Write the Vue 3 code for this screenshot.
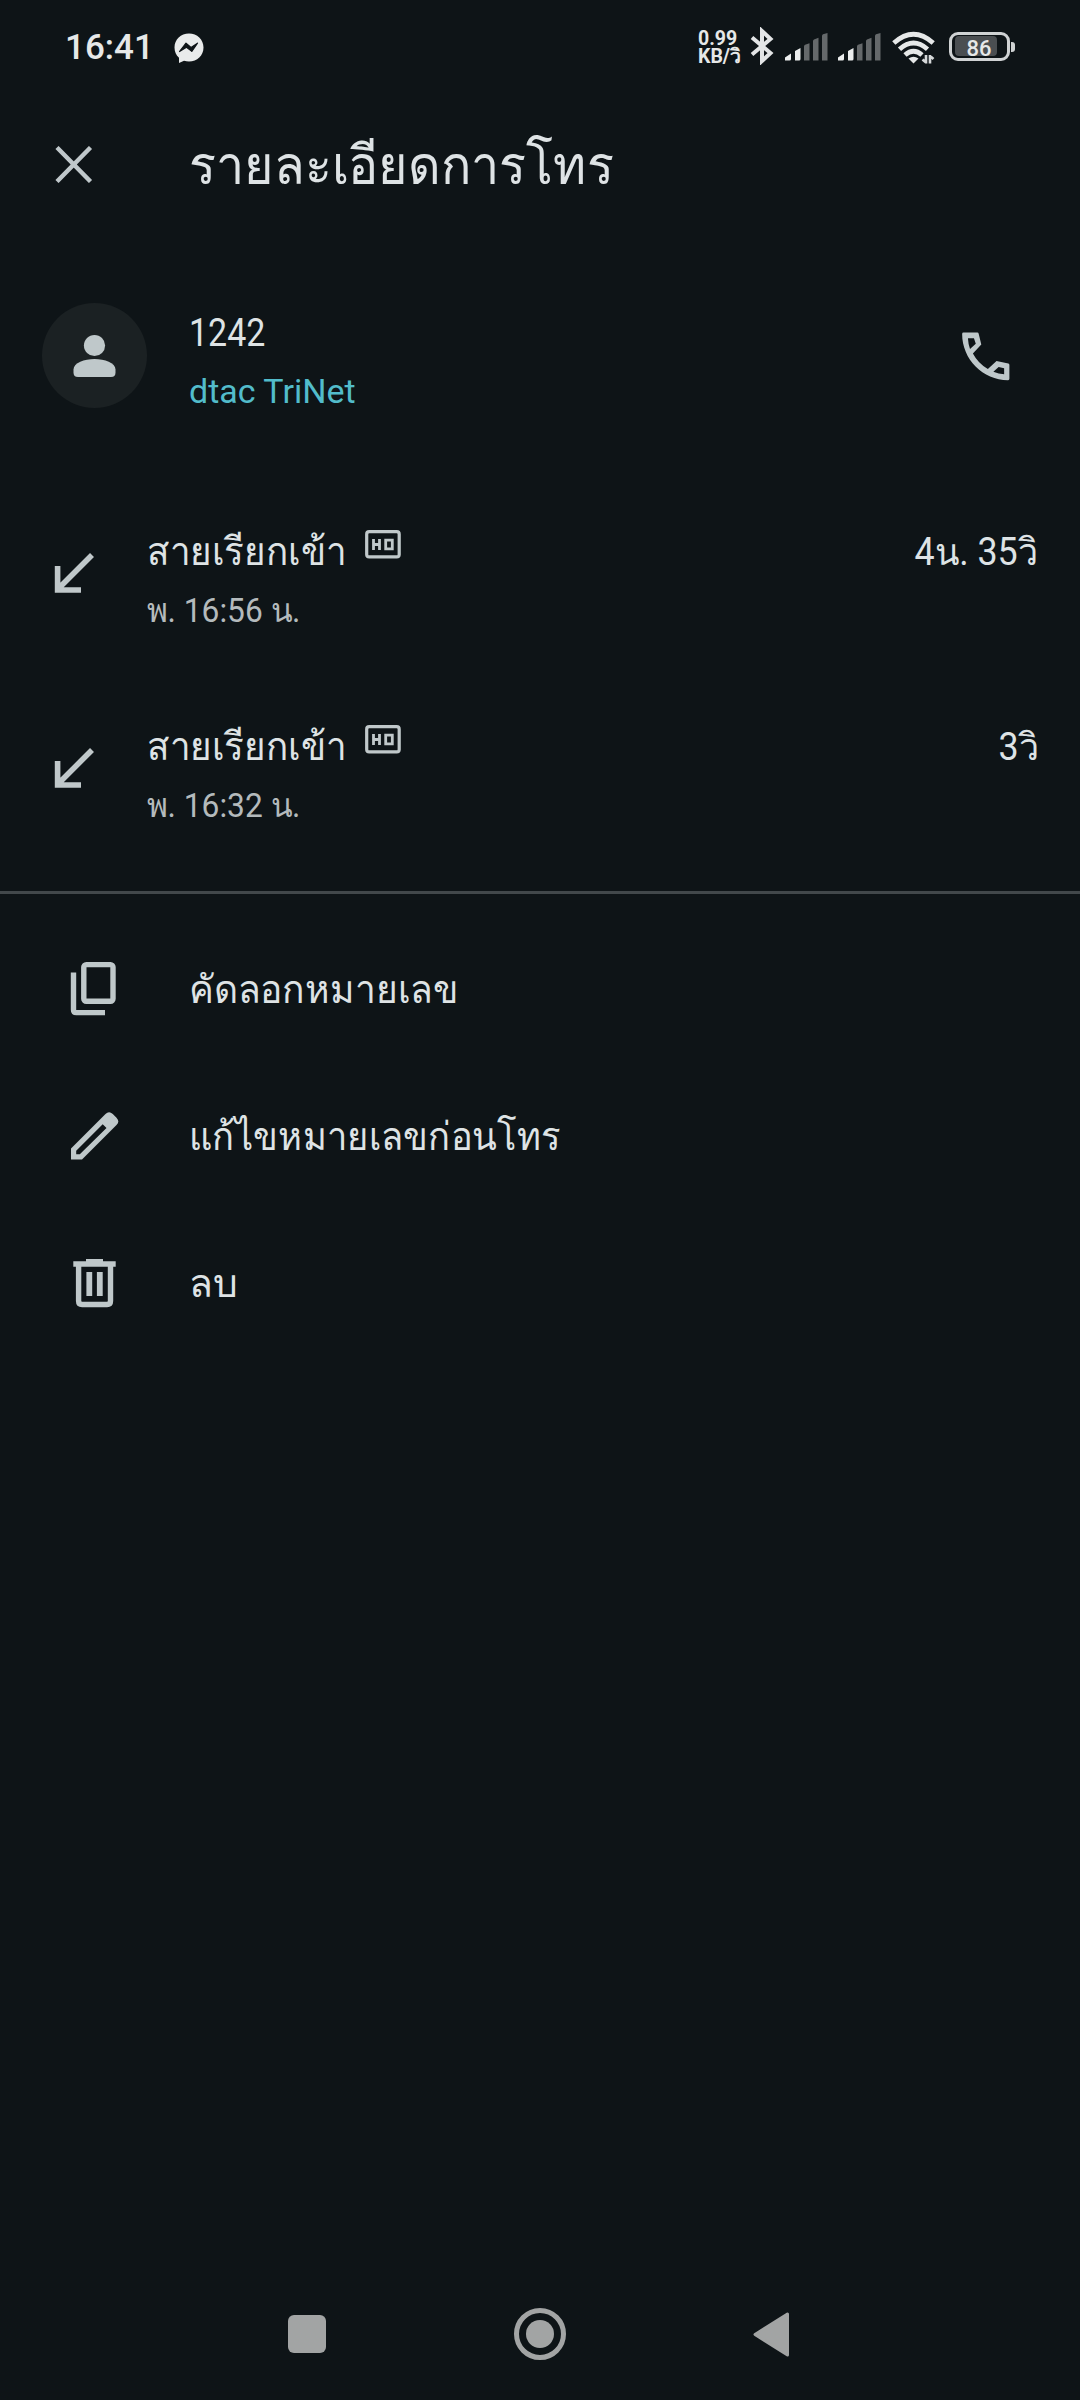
<script setup>
const calls = [
  { type: 'สายเรียกเข้า', time: 'พ. 16:56 น.', duration: '4น. 35วิ' },
  { type: 'สายเรียกเข้า', time: 'พ. 16:32 น.', duration: '3วิ' },
]
const actions = [
  { icon: 'copy', label: 'คัดลอกหมายเลข' },
  { icon: 'edit', label: 'แก้ไขหมายเลขก่อนโทร' },
  { icon: 'delete', label: 'ลบ' },
]
</script>

<template>
  <div class="screen">
    <header class="status">
      <span class="clock">16:41</span>
      <svg class="messenger" width="30" height="31" viewBox="0 0 30 31">
        <path d="M15 0.5C6.8 0.5.5 6.5.5 14.5c0 4.200 1.700 7.700 4.500 10.200V30l5-2.300c1.600.5 3.300.8 5 .8 8.200 0 14.500-6 14.500-14S23.200.5 15 .5Z" fill="#e9ebeb" />
        <path d="M5.500 18.500 12 10.200l5 4.300 6.500-4.300-5.700 8.200-5.300-4.200Z" fill="#0e1417" stroke="#0e1417" stroke-width="1.200" stroke-linejoin="round" />
      </svg>
      <div class="speed">0.99<br>KB/วิ</div>
      <svg class="bt" width="25" height="38" viewBox="0 0 25 38">
        <path d="M2 10.500 20.500 26 12 34V4l8.500 8L2 27.500" fill="none" stroke="#e3e5e6" stroke-width="4" />
      </svg>
      <svg v-for="n in 2" :key="n" class="signal" width="43" height="28" viewBox="0 0 43 28">
        <path d="M0 27.500v-3l6-4v5.500q0 1.500-1.500 1.500ZM10 27.500V18l5.500-3v11q0 1.500-1.500 1.500Z" fill="#eceeee" />
        <path d="M19 27.500V13.500q0-1.200 1-1.700l4.500-1.600v17.300ZM28 27.500V8q0-1 1-1.500l4.500-1.700v22.700ZM37 27.500V3q0-1.300 1-1.700L42.500 0v27.500Z" fill="#65696b" />
      </svg>
      <svg class="wifi" width="44" height="34" viewBox="0 0 44 34">
        <g fill="none" stroke="#e6e8e8" stroke-width="4.800">
          <path d="M1.800 12Q21.500-5.500 41.200 12" />
          <path d="M7.500 18.200Q21.500 5.800 35.500 18.200" />
          <path d="M13 24Q21.500 16.500 30 24" />
        </g>
        <path d="M16.500 27.500q5-3.500 10 0L21.500 32.500Z" fill="#e6e8e8" />
        <path d="M34 24v8.500M30.500 28.500l3.500 3M38 32.500V24M38 25l3.500 3" fill="none" stroke="#d5d8d9" stroke-width="2.600" />
      </svg>
      <div class="battery"><i></i><b>86</b></div>
      <span class="tip"></span>
    </header>

    <div class="appbar">
      <svg width="38" height="37" viewBox="0 0 38 37"><path d="M2 1.500 35.500 35.500M35.500 1.500 2 35.500" stroke="#c0c8cb" stroke-width="4.400" /></svg>
      <h1>รายละเอียดการโทร</h1>
    </div>

    <section class="contact">
      <div class="avatar">
        <svg width="44" height="44" viewBox="0 0 44 44" fill="#bfc8ca">
          <circle cx="21.500" cy="11.500" r="10.600" />
          <path d="M.5 38.500V35.500C.5 29 11.500 25 21.500 25s21 4 21 10.500v3q0 4.500-4.500 4.500h-33Q.5 43 .5 38.500Z" />
        </svg>
      </div>
      <div class="who">
        <div class="number">1242</div>
        <div class="carrier">dtac TriNet</div>
      </div>
      <svg class="phone" width="63" height="63" viewBox="0 0 24 24" fill="#bfc8ca">
        <path fill-rule="evenodd" d="M3.600 2.900H8.900Q9.300 2.900 9.400 3.300L10.400 7.400 7.200 10.900Q9.200 14.700 12.900 16.800L16.200 13.700 20.700 14.700Q21.100 14.800 21.100 15.200V20.500Q21.100 21 20.600 21C11 21 3.100 13 3.100 3.400Q3.100 2.900 3.600 2.900ZM5.300 5Q5.400 7 6.100 9.100L8.300 7.100 7.600 5ZM15 17.800Q17 18.600 19.100 18.800V16.500L17 16Z" />
      </svg>
    </section>

    <section class="calls">
      <div v-for="c in calls" :key="c.time" class="call">
        <svg class="arrow" width="40" height="40" viewBox="0 0 40 40"><path d="M38 2 4 36M3.600 13V37H27" fill="none" stroke="#c0c8ca" stroke-width="5.600" /></svg>
        <div class="info">
          <div class="line">
            <span class="type">{{ c.type }}</span>
            <svg class="hd" width="36" height="29" viewBox="0 0 36 29" fill="none" stroke="#c0c8ca">
              <rect x="1.700" y="1.700" width="32.500" height="25.200" rx="2.500" stroke-width="3.200" />
              <path d="M8.500 9v11M14.500 9v11M8.200 14.500h6.600M20.700 10.200h6.600v8.600h-6.600Z" stroke-width="2.800" />
            </svg>
          </div>
          <div class="time">{{ c.time }}</div>
        </div>
        <div class="duration">{{ c.duration }}</div>
      </div>
    </section>

    <hr class="divider" />

    <nav class="actions">
      <div v-for="a in actions" :key="a.icon" class="action">
        <svg v-if="a.icon === 'copy'" width="63" height="63" viewBox="0 0 63 63" fill="none" stroke="#bfc8ca" stroke-width="5.400">
          <rect x="20.800" y="7.600" width="29.200" height="36.700" rx="2.500" />
          <path d="M10.500 15.600v37.200q0 2.800 2.800 2.800H42" />
        </svg>
        <svg v-else-if="a.icon === 'edit'" width="63" height="63" viewBox="0 0 63 63" fill="#bfc8ca">
          <path fill-rule="evenodd" d="M8 55.500V44.500L42.500 10Q46 6.300 49.800 10L53.500 13.700Q57.200 17.500 53.500 21L19 55.500ZM13.200 50.300h3.600L43.500 24 39.700 20.200 13.200 46.700Z" />
        </svg>
        <svg v-else width="63" height="63" viewBox="0 0 63 63" fill="none" stroke="#bfc8ca" stroke-width="5.400">
          <path d="M10.300 13H52.700M23 10.600H40M15.600 13V50q0 3.500 3.500 3.500H44q3.500 0 3.500-3.500V13" />
          <path d="M26.300 21V45M36.800 21V45" stroke-width="5.800" />
        </svg>
        <span :class="a.icon">{{ a.label }}</span>
      </div>
    </nav>

    <footer class="navbar">
      <span class="recents"></span>
      <span class="home"><i></i></span>
      <svg width="37" height="45" viewBox="0 0 37 45"><path d="M34.500 2V43L2 22.500Z" fill="#a2a4a4" stroke="#a2a4a4" stroke-width="3" stroke-linejoin="round" /></svg>
    </footer>
  </div>
</template>

<style>
body { background: #0e1417; }
</style>

<style scoped>
* { box-sizing: border-box; }
.screen {
  width: 1080px; height: 2400px; background: #0e1417; color: #dee3e5;
  display: flex; flex-direction: column; overflow: hidden;
  font-family: Roboto, "Noto Sans", sans-serif; white-space: nowrap;
}
svg { display: block; flex: none; }
.status { height: 96px; display: flex; align-items: flex-start; padding-left: 65px; flex: none; color: #e6e8e8; }
.clock { width: 109px; margin-top: 27px; font-size: 35px; line-height: 41px; font-weight: 500; }
.messenger { margin-top: 33px; }
.speed { width: 52px; margin: 30px 0 0 494px; font-size: 19.500px; line-height: 18px; font-weight: 700; }
.bt { margin-top: 27px; }
.signal { margin: 33px 0 0 10px; }
.wifi { margin: 31px 0 0 11px; }
.battery { position: relative; margin: 32px 0 0 13px; width: 61px; height: 29px; border: 3px solid #cfd2d3; border-radius: 9px; }
.battery i { position: absolute; left: 3px; top: 1px; width: 42px; height: 20px; border-radius: 4px; background: #4a4e51; }
.battery b { position: absolute; left: 0; width: 50px; top: 2px; text-align: center; padding-left: 4px; font-size: 22px; line-height: 24px; font-weight: 500; }
.tip { width: 4px; height: 10px; margin: 42px 0 0 1px; border-radius: 0 3px 3px 0; background: #cfd2d3; }
.appbar { height: 140px; flex: none; display: flex; align-items: flex-start; padding: 50px 0 0 55px; }
.appbar h1 { margin: -15px 0 0 96px; font-size: 54px; line-height: 70px; font-weight: 400; transform: scaleX(0.932); transform-origin: left; }
.contact { height: 240px; flex: none; display: flex; align-items: flex-start; padding: 67px 63px 0 42px; }
.avatar { width: 105px; height: 105px; border-radius: 50%; background: #1b2123; display: flex; align-items: center; justify-content: center; }
.who { flex: 1; margin-left: 42px; }
.number { height: 60px; font-size: 39px; line-height: 61px; transform: scaleX(0.87); transform-origin: left; }
.carrier { height: 56px; font-size: 34px; line-height: 56px; color: #52bccb; }
.phone { margin-top: 22px; }
.calls { flex: none; height: 415px; padding-top: 39px; }
.call { height: 195px; display: flex; align-items: flex-start; padding: 0 42px 0 54px; }
.arrow { margin-top: 38px; }
.info { flex: 1; margin-left: 53px; }
.line { display: flex; height: 72px; }
.type { width: 218px; font-size: 39px; line-height: 74px; transform: scaleX(0.943); transform-origin: left; }
.hd { margin-top: 15px; }
.time { font-size: 34px; line-height: 47px; color: #b4babc; transform: scaleX(0.933); transform-origin: left; }
.duration { font-size: 38px; line-height: 74px; transform: scaleX(0.942); transform-origin: right; }
.divider { flex: none; width: 100%; height: 3px; margin: 0; border: 0; background: #42484b; }
.actions { flex: 1; padding-top: 21px; }
.action { height: 147px; display: flex; align-items: center; padding-left: 63px; font-size: 39px; }
.action span { margin-left: 63px; transform-origin: left; }
.action .copy { transform: scaleX(0.953); }
.action .edit { transform: scaleX(0.931); }
.navbar { height: 132px; flex: none; display: flex; align-items: center; padding-left: 288px; }
.recents { width: 38px; height: 38px; border-radius: 6px; background: #a2a4a4; }
.home { width: 52px; height: 52px; margin-left: 188px; border: 5px solid #a2a4a4; border-radius: 50%; display: flex; align-items: center; justify-content: center; }
.home i { width: 28px; height: 28px; border-radius: 50%; background: #a2a4a4; }
.navbar svg { margin-left: 187px; }
</style>
